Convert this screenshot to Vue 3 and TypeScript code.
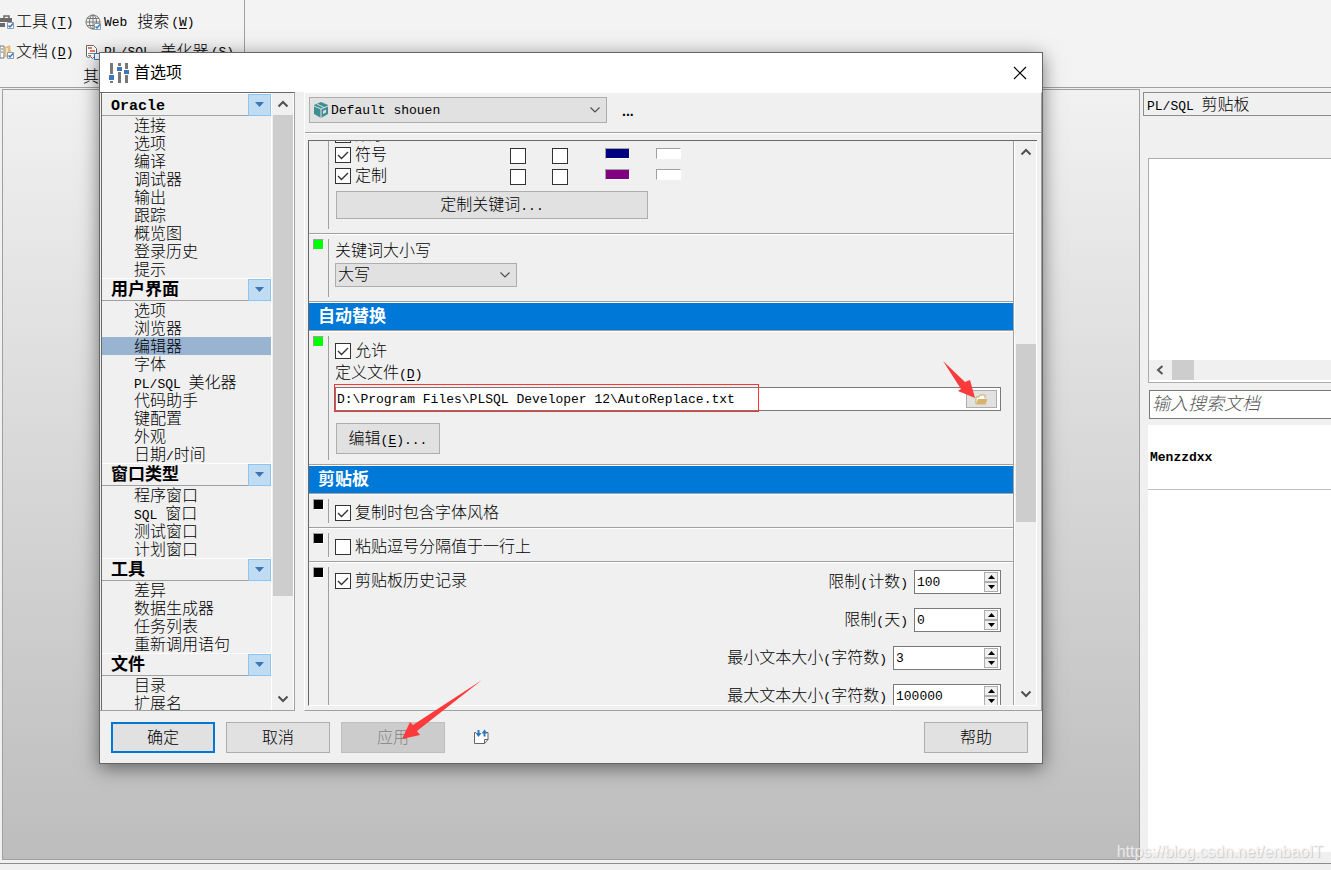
<script setup lang="ts">
import { h, ref } from 'vue'

interface TreeGroup {
  title: string
  items: string[]
}

interface LimitField {
  id: string
  label: string
  value: number
  wide: boolean
}

interface StyleRow {
  name: string
  checked: boolean
  color: string
}

// Splits a caption into CJK and Latin runs; "&X" marks the access key.
const Caption = (props: { text: string }) => {
  const runs = props.text.match(/[\x20-\x7e]+|[^\x20-\x7e]+/g) ?? []
  return runs.map((run) => {
    if (!/^[\x20-\x7e]/.test(run)) return run
    const parts = run.split(/&(.)/)
    return h('span', { class: 'mono' }, parts.map((p, i) => (i % 2 ? h('u', p) : p)))
  })
}
Caption.props = ['text']

const groups: TreeGroup[] = [
  { title: 'Oracle', items: ['连接', '选项', '编译', '调试器', '输出', '跟踪', '概览图', '登录历史', '提示'] },
  { title: '用户界面', items: ['选项', '浏览器', '编辑器', '字体', 'PL/SQL 美化器', '代码助手', '键配置', '外观', '日期/时间'] },
  { title: '窗口类型', items: ['程序窗口', 'SQL 窗口', '测试窗口', '计划窗口'] },
  { title: '工具', items: ['差异', '数据生成器', '任务列表', '重新调用语句'] },
  { title: '文件', items: ['目录', '扩展名'] },
]
const selected = ref('编辑器')

const styleRows = ref<StyleRow[]>([
  { name: '数字', checked: true, color: 'navy' },
  { name: '符号', checked: true, color: 'navy' },
  { name: '定制', checked: true, color: 'purple' },
])

const allow = ref(true)
const copyStyle = ref(true)
const pasteComma = ref(false)
const history = ref(true)
const path = ref('D:\\Program Files\\PLSQL Developer 12\\AutoReplace.txt')

const limits = ref<LimitField[]>([
  { id: 'count', label: '限制(计数)', value: 100, wide: false },
  { id: 'days', label: '限制(天)', value: 0, wide: false },
  { id: 'min', label: '最小文本大小(字符数)', value: 3, wide: true },
  { id: 'max', label: '最大文本大小(字符数)', value: 100000, wide: true },
])
</script>

<template>
  <div class="app">
    <header class="ribbon">
      <div class="group">
        <div class="tools">
          <button class="tool">
            <svg width="14" height="16" viewBox="0 0 14 16">
              <path d="M4 4V2h5v2" fill="none" stroke="#6b6b6b" stroke-width="1.5" />
              <path d="M0 4h12v4H0zM0 9h5v4H0z" fill="#6b6b6b" />
              <path d="M7.500 8.500h6v6h-6z" fill="#fff" stroke="#8a9cb0" />
              <path d="M8.500 11.500l1.500 1.500 3-3.500" fill="none" stroke="#2f78c4" stroke-width="1.500" />
            </svg>
            <Caption text="工具(&T)" />
          </button>
          <button class="tool">
            <svg width="17" height="17" viewBox="0 0 17 17">
              <g fill="none" stroke="#777">
                <circle cx="8" cy="8" r="7" />
                <ellipse cx="8" cy="8" rx="3.500" ry="7" />
                <path d="M1 8h14M2 4.500h12M2 11.500h12M8 1v14" />
              </g>
              <path d="M9.500 9.500h6v6h-6z" fill="#fff" stroke="#8a9cb0" />
              <path d="M10.500 12.500l1.500 1.500 3-3.500" fill="none" stroke="#2f78c4" stroke-width="1.500" />
            </svg>
            <Caption text="Web 搜索(&W)" />
          </button>
          <button class="tool">
            <svg width="14" height="16" viewBox="0 0 14 16">
              <path d="M0 2h4v12H0z" fill="#fff" stroke="#777" />
              <path d="M1 5h2M1 8h2" stroke="#777" />
              <path d="M5 3l5-2 1 7-2 5H5z" fill="#e6bd78" />
              <path d="M7 4v7" stroke="#fff" />
              <path d="M7.500 8.500h6v6h-6z" fill="#fff" stroke="#8a9cb0" />
              <path d="M8.500 11.500l1.500 1.500 3-3.500" fill="none" stroke="#2f78c4" stroke-width="1.500" />
            </svg>
            <Caption text="文档(&D)" />
          </button>
          <button class="tool">
            <svg width="17" height="17" viewBox="0 0 17 17">
              <path d="M1.500 1.500h7l3 3v9l-2-1-2 2-2-2-2 1-2-1z" fill="#fff" stroke="#666" />
              <path d="M3 4h4M5 7h5" stroke="#d9532c" stroke-width="1.500" />
              <path d="M3 9.500h6M3 11.500h3" stroke="#888" />
              <path d="M9.500 9.500h6v6h-6z" fill="#fff" stroke="#2f78c4" />
            </svg>
            <Caption text="PL/SQL 美化器(&S)" />
          </button>
        </div>
        <div class="group-name">其它</div>
      </div>
    </header>

    <main class="work">
      <div class="mdi"></div>
      <aside class="dock">
        <h2 class="dock-title"><Caption text="PL/SQL 剪贴板" /></h2>
        <div class="clips">
          <div class="clip-list"></div>
          <div class="hbar">
            <svg width="8" height="10" viewBox="0 0 8 10"><path d="M6.500 1L2 5l4.500 4" fill="none" stroke="#555" stroke-width="2" /></svg>
            <span class="hthumb"></span>
          </div>
        </div>
        <input class="search" type="text" placeholder="输入搜索文档" aria-label="输入搜索文档" />
        <div class="result"><p>Menzzdxx</p></div>
      </aside>
    </main>
    <footer class="status"></footer>

    <section class="dialog" role="dialog" aria-labelledby="dlg-title">
      <div class="titlebar">
        <svg width="22" height="22" viewBox="0 0 22 22">
          <path d="M3.500 1v20M11.500 1v20M18.500 1v20" stroke="#777" stroke-width="3" />
          <path d="M1 12h5v7H1zM9 4h5v6H9zM16 7h5v6h-5z" fill="#fff" />
          <path d="M1 13h5v5H1zM9 5h5v4H9zM16 8h5v4h-5z" fill="#3c78b8" />
        </svg>
        <h1 id="dlg-title">首选项</h1>
        <button class="close" aria-label="关闭">
          <svg width="14" height="14" viewBox="0 0 14 14"><path d="M1 1l12 12M13 1L1 13" stroke="#000" stroke-width="1.200" /></svg>
        </button>
      </div>

      <div class="body">
        <nav class="tree">
          <div class="tree-list">
            <template v-for="g in groups" :key="g.title">
              <div class="tree-head">
                <h3><Caption :text="g.title" /></h3>
                <button class="drop" :aria-label="g.title">
                  <svg width="10" height="6" viewBox="0 0 10 6"><path d="M0 0h9L4.500 5z" fill="#3c74b4" /></svg>
                </button>
              </div>
              <button
                v-for="i in g.items"
                :key="i"
                class="leaf"
                :class="{ on: i === selected }"
                @click="selected = i"
              ><Caption :text="i" /></button>
            </template>
          </div>
          <div class="vbar">
            <svg class="arr" width="12" height="8" viewBox="0 0 12 8"><path d="M1.500 6.500L6 2l4.500 4.500" fill="none" stroke="#505050" stroke-width="2" /></svg>
            <div class="track"><span class="thumb tree-thumb"></span></div>
            <svg class="arr" width="12" height="8" viewBox="0 0 12 8"><path d="M1.500 1.500L6 6l4.500-4.500" fill="none" stroke="#505050" stroke-width="2" /></svg>
          </div>
        </nav>

        <div class="pane">
          <div class="profile">
            <div class="combo profile-combo">
              <svg class="cube" width="16" height="16" viewBox="0 0 16 16">
                <path d="M8 0l7 3v9l-7 4-7-4V3z" fill="#3f8f92" />
                <path d="M1 4l7 3 7-3M8 7v9M4 2l7 3.500" fill="none" stroke="#e1e1e1" />
                <path d="M10 9l3-1.500v3L10 12z" fill="#e1e1e1" />
              </svg>
              <select class="mono-field" aria-label="配置">
                <option>Default shouen</option>
              </select>
              <svg class="chev" width="12" height="8" viewBox="0 0 12 8"><path d="M1.500 1.500L6 6l4.500-4.500" fill="none" stroke="#505050" stroke-width="1.200" /></svg>
            </div>
            <button class="more" aria-label="更多">...</button>
          </div>

          <div class="frame">
            <div class="options">
              <div class="opt first">
                <div class="mark"></div>
                <div class="cell">
                  <div v-for="r in styleRows" :key="r.name" class="style-row">
                    <label><input v-model="r.checked" type="checkbox" />{{ r.name }}</label>
                    <input type="checkbox" :aria-label="r.name + ' 粗体'" />
                    <input type="checkbox" :aria-label="r.name + ' 斜体'" />
                    <span class="swatch" :style="{ background: r.color }"></span>
                    <span class="swatch"></span>
                  </div>
                  <button class="btn keywords"><Caption text="定制关键词..." /></button>
                </div>
              </div>

              <div class="opt">
                <div class="mark"><i class="dot green"></i></div>
                <div class="cell case">
                  <label for="kw-case">关键词大小写</label>
                  <div class="combo case-combo">
                    <select id="kw-case"><option>大写</option></select>
                    <svg class="chev" width="12" height="8" viewBox="0 0 12 8"><path d="M1.500 1.500L6 6l4.500-4.500" fill="none" stroke="#505050" stroke-width="1.200" /></svg>
                  </div>
                </div>
              </div>

              <h3 class="band">自动替换</h3>

              <div class="opt">
                <div class="mark"><i class="dot green"></i></div>
                <div class="cell replace">
                  <label><input v-model="allow" type="checkbox" />允许</label>
                  <label for="def-file"><Caption text="定义文件(&D)" /></label>
                  <div class="file">
                    <input id="def-file" v-model="path" class="mono-field" type="text" />
                    <button class="browse" aria-label="浏览">
                      <svg width="13" height="11" viewBox="0 0 13 11">
                        <path d="M1 10V3h3l1-2h5v3" fill="#fff" stroke="#d0a860" />
                        <path d="M1 10.500L3 5h9.500l-2 5.500z" fill="#d9b36c" />
                      </svg>
                      <svg class="arrow-a" width="34" height="40" viewBox="0 0 34 40"><path d="M1 1L23 22l5-2 5 18-17-7 3-2z" fill="#fb3b3b" /></svg>
                    </button>
                    <span class="redbox"></span>
                  </div>
                  <button class="btn edit"><Caption text="编辑(&E)..." /></button>
                </div>
              </div>

              <h3 class="band">剪贴板</h3>

              <div class="opt">
                <div class="mark"><i class="dot"></i></div>
                <div class="cell line"><label><input v-model="copyStyle" type="checkbox" />复制时包含字体风格</label></div>
              </div>
              <div class="opt">
                <div class="mark"><i class="dot"></i></div>
                <div class="cell line"><label><input v-model="pasteComma" type="checkbox" />粘贴逗号分隔值于一行上</label></div>
              </div>
              <div class="opt last">
                <div class="mark"><i class="dot"></i></div>
                <div class="cell line hist">
                  <label><input v-model="history" type="checkbox" />剪贴板历史记录</label>
                  <div class="limits">
                    <div v-for="f in limits" :key="f.id" class="limit">
                      <label :for="f.id"><Caption :text="f.label" /></label>
                      <div class="spin" :class="{ wide: f.wide }">
                        <input :id="f.id" v-model="f.value" class="mono-field" type="number" />
                        <div class="steps">
                          <button aria-label="增加" @click="f.value++"><svg width="7" height="4" viewBox="0 0 7 4"><path d="M0 4h7L3.500 0z" /></svg></button>
                          <button aria-label="减少" @click="f.value--"><svg width="7" height="4" viewBox="0 0 7 4"><path d="M0 0h7L3.500 4z" /></svg></button>
                        </div>
                      </div>
                    </div>
                  </div>
                </div>
              </div>
            </div>
            <div class="vbar">
              <svg class="arr" width="12" height="8" viewBox="0 0 12 8"><path d="M1.500 6.500L6 2l4.500 4.500" fill="none" stroke="#505050" stroke-width="2" /></svg>
              <div class="track"><span class="thumb opt-thumb"></span></div>
              <svg class="arr" width="12" height="8" viewBox="0 0 12 8"><path d="M1.500 1.500L6 6l4.500-4.500" fill="none" stroke="#505050" stroke-width="2" /></svg>
            </div>
          </div>
        </div>
      </div>

      <div class="actions">
        <button class="btn ok">确定</button>
        <button class="btn">取消</button>
        <span class="apply">
          <button class="btn" disabled>应用</button>
          <svg class="arrow-b" width="82" height="62" viewBox="0 0 82 62"><path d="M81 1L12 46l-3-3L1 60l18-4-3-4z" fill="#fb3b3b" /></svg>
        </span>
        <button class="transfer" aria-label="导入导出">
          <svg width="17" height="16" viewBox="0 0 17 16">
            <path d="M3 3.500H1.500v11h10l3.500-4v-7H13" fill="#fff" stroke="#666" />
            <path d="M11.500 14.500v-4H15" fill="none" stroke="#666" />
            <path d="M5.500 1v5M11.500 7.500V3" stroke="#2f78b8" stroke-width="2" />
            <path d="M2.500 4h6l-3 4zM8.500 4.500h6l-3-4z" fill="#2f78b8" />
          </svg>
        </button>
        <button class="btn help">帮助</button>
      </div>
    </section>

    <p class="watermark">https://blog.csdn.net/enbaoIT</p>
  </div>
</template>

<style>
html,
body {
  background: #f0f0f0;
}
.mono {
  font-family: "Liberation Mono", monospace;
  font-size: 13px;
  line-height: 1;
  white-space: pre;
}
h3 .mono {
  font-size: 15px;
}
.mono u {
  text-underline-offset: 2px;
}
</style>

<style scoped>
.app {
  position: relative;
  display: flex;
  flex-direction: column;
  min-height: 100vh;
  overflow: hidden;
  background: #f0f0f0;
  color: #000;
  font: 300 16px/20px "Liberation Sans", "Noto Sans CJK SC", sans-serif;
}
* {
  box-sizing: border-box;
}
button,
input,
select {
  margin: 0;
  padding: 0;
  border: 0;
  border-radius: 0;
  background: none;
  color: inherit;
  font: inherit;
}
h1,
h2,
h3,
p {
  margin: 0;
  font-size: 16px;
  font-weight: 300;
}
svg {
  display: block;
  flex: none;
}
.mono-field {
  padding-top: 2px;
  font-family: "Liberation Mono", monospace;
  font-size: 13px;
}

/* ribbon */
.ribbon {
  display: flex;
  height: 88px;
  background: #f3f3f3;
  border-bottom: 1px solid #a0a0a0;
}
.group {
  width: 245px;
  border-right: 1px solid #a0a0a0;
}
.tools {
  display: grid;
  grid-template-columns: 85px 1fr;
  grid-auto-rows: 30px;
  padding-top: 7px;
}
.tool {
  display: flex;
  align-items: center;
  gap: 2px;
  white-space: nowrap;
}
.group-name {
  padding-left: 83px;
}

/* workspace */
.work {
  display: flex;
  flex: 1;
  gap: 3px;
  padding: 1px 0 3px 2px;
}
.mdi {
  flex: 1;
  border: 1px solid #a0a0a0;
  background: linear-gradient(#f1f1f1, #bdbdbd);
}
.dock {
  display: flex;
  flex-direction: column;
  width: 188px;
  padding: 3px 0 8px;
}
.dock-title {
  height: 24px;
  padding-left: 3px;
  border: 1px solid #8c8c8c;
  border-right: 0;
  line-height: 24px;
}
.clips {
  display: flex;
  flex-direction: column;
  height: 225px;
  margin: 42px 0 7px 5px;
  padding-bottom: 2px;
  border: 1px solid #abadb3;
  border-right: 0;
  background: #fff;
}
.clip-list {
  flex: 1;
}
.hbar {
  display: flex;
  align-items: center;
  gap: 8px;
  height: 20px;
  padding-left: 7px;
  background: #f0f0f0;
}
.hthumb {
  width: 22px;
  height: 20px;
  background: #cdcdcd;
}
.search {
  height: 29px;
  margin-left: 6px;
  padding-left: 2px;
  border: 1px solid #7a7a7a;
  border-right: 0;
  background: #fff;
  font-size: 18px;
  font-style: italic;
}
.search::placeholder {
  color: #555;
  opacity: 1;
}
.result {
  flex: 1;
  margin: 6px 0 0 5px;
  background: #fff;
}
.result p {
  height: 65px;
  padding: 23px 0 0 2px;
  border-bottom: 1px solid #c0c0c0;
  font: bold 13px/20px "Liberation Mono", monospace;
}
.status {
  height: 7px;
  border-top: 1px solid #8c8c8c;
}

/* dialog */
.dialog {
  position: absolute;
  inset: 52px 288px 106px 99px;
  display: flex;
  flex-direction: column;
  border: 1px solid #666;
  background: #f0f0f0;
  box-shadow: 0 4px 18px rgba(0, 0, 0, 0.5);
}
.titlebar {
  display: flex;
  align-items: center;
  gap: 4px;
  height: 39px;
  padding: 0 15px 0 8px;
  background: #fff;
}
.titlebar h1 {
  font-weight: 400;
}
.close {
  display: flex;
  margin-left: auto;
}
.body {
  display: flex;
  flex: 1;
  min-height: 0;
  gap: 9px;
}
.tree {
  display: flex;
  width: 195px;
  padding-left: 1px;
  border-top: 1px solid #696969;
  border-right: 1px solid #a0a0a0;
  border-bottom: 1px solid #a0a0a0;
}
.tree-list {
  width: 170px;
  overflow: hidden;
  border-left: 1px solid #696969;
}
.tree-head {
  display: flex;
  align-items: center;
  justify-content: space-between;
  height: 23px;
  padding-left: 9px;
  border-top: 1px solid #fff;
  border-bottom: 1px solid #a0a0a0;
}
.tree-head h3 {
  font-size: 17px;
  font-weight: 700;
}
.drop {
  display: grid;
  place-items: center;
  width: 23px;
  height: 22px;
  border: 1px solid #8ec5f0;
  background: #c0dcf3;
}
.leaf {
  display: block;
  width: 100%;
  height: 18px;
  padding-left: 32px;
  line-height: 20px;
  text-align: left;
  white-space: nowrap;
}
.leaf.on {
  background: #99b4d1;
}
.vbar {
  display: flex;
  flex-direction: column;
  align-items: center;
  justify-content: space-between;
  flex: none;
  width: 23px;
  padding: 7px 1px;
  border-right: 1px solid #fff;
  border-left: 1px solid #fff;
}
.track {
  flex: 1;
  width: 20px;
  margin: 7px 0;
}
.thumb {
  display: block;
  width: 20px;
  background: #cdcdcd;
}
.tree-thumb {
  height: 84%;
}
.pane {
  display: flex;
  flex: 1;
  flex-direction: column;
  min-width: 0;
  border-top: 1px solid #fff;
  border-left: 1px solid #fff;
  border-bottom: 1px solid #a0a0a0;
  border-right: 1px solid #a0a0a0;
}
.profile {
  display: flex;
  align-items: center;
  gap: 15px;
  height: 40px;
  padding: 0 4px 6px;
  border-bottom: 1px solid #a0a0a0;
  box-shadow: 0 1px #fff;
}
.combo {
  position: relative;
  display: flex;
  align-items: center;
  border: 1px solid #adadad;
  background: #e1e1e1;
}
.combo select {
  flex: 1;
  height: 100%;
  padding-left: 2px;
  appearance: none;
}
.combo .chev {
  margin-right: 5px;
  pointer-events: none;
}
.profile-combo {
  width: 298px;
  height: 26px;
}
.cube {
  margin-left: 3px;
}
.more {
  padding-top: 2px;
  font-size: 14px;
  font-weight: 700;
}
.frame {
  display: flex;
  flex: 1;
  min-height: 0;
  margin: 7px 4px 4px 3px;
  border-top: 1px solid #696969;
  border-left: 1px solid #696969;
  border-bottom: 1px solid #fff;
}
.options {
  flex: 1;
  min-width: 0;
  overflow: hidden;
  border-right: 1px solid #a0a0a0;
}
.opt-thumb {
  height: 178px;
  margin-top: 181px;
}
.opt {
  display: flex;
  padding: 5px 0 4px;
  border-bottom: 1px solid #a0a0a0;
  box-shadow: 0 1px #fff;
}
.opt.first {
  padding-top: 0;
}
.opt.last {
  border: 0;
}
.mark {
  flex: none;
  width: 20px;
  padding-left: 4px;
  border-right: 1px solid #a0a0a0;
}
.dot {
  display: block;
  width: 11px;
  height: 11px;
  border: 1px solid #a0a0a0;
  border-right-color: #fff;
  border-bottom-color: #fff;
  background: #000;
}
.dot.green {
  background: #0f0;
}
.cell {
  flex: 1;
  min-width: 0;
  padding: 0 12px 0 6px;
}
label {
  display: flex;
  align-items: center;
  gap: 4px;
  white-space: nowrap;
}
.replace label[for],
.limit label {
  display: block;
}
input[type="checkbox"] {
  flex: none;
  width: 16px;
  height: 16px;
  appearance: none;
  border: 1px solid #333;
  background: #fff;
}
input[type="checkbox"]:checked {
  background: #fff url("data:image/svg+xml,%3Csvg xmlns='http://www.w3.org/2000/svg' viewBox='0 0 14 14'%3E%3Cpath d='M2 7l3.500 3.500L12 4' fill='none' stroke='%23333' stroke-width='1.400'/%3E%3C/svg%3E");
}
.first .cell {
  margin-top: -17px;
  padding-bottom: 10px;
}
.style-row {
  display: grid;
  grid-template-columns: 175px 42px 53px 51px 24px;
  height: 21px;
  line-height: 22px;
}
.style-row:first-child {
  height: 20px;
}
.style-row > input,
.swatch {
  margin-top: 4px;
}
.style-row:first-child > input {
  margin-top: 0;
}
.swatch {
  width: 25px;
  height: 11px;
  border: 1px solid #a0a0a0;
  border-right-color: #fff;
  border-bottom-color: #fff;
  background: #fff;
}
.btn {
  width: 104px;
  height: 31px;
  border: 1px solid #adadad;
  background: #e1e1e1;
}
.btn.keywords {
  display: block;
  width: 312px;
  height: 28px;
  margin: 5px 0 0 1px;
}
.cell.case {
  padding-bottom: 10px;
}
.case label {
  height: 24px;
}
.case-combo {
  width: 182px;
  height: 24px;
}
.band {
  height: 29px;
  padding-left: 9px;
  border-top: 1px solid #fff;
  border-bottom: 1px solid #a0a0a0;
  box-shadow: 0 1px #fff;
  background: #0078d7;
  color: #fff;
  font-size: 17px;
  font-weight: 700;
  line-height: 28px;
}
.replace {
  padding-top: 4px;
  padding-bottom: 6px;
}
.replace label {
  height: 22px;
  line-height: 22px;
}
.file {
  position: relative;
  display: flex;
  align-items: center;
  height: 24px;
  margin: 3px 0 12px;
  padding: 0 3px 0 1px;
  border: 1px solid #7a7a7a;
  background: #fff;
}
.file input {
  flex: 1;
  min-width: 0;
  height: 20px;
}
.browse {
  position: relative;
  display: grid;
  place-items: center;
  width: 31px;
  height: 18px;
  border: 1px solid #adadad;
  background: #e1e1e1;
}
.arrow-a {
  position: absolute;
  right: 20px;
  bottom: 7px;
}
.redbox {
  position: absolute;
  top: -4px;
  left: -2px;
  width: 425px;
  height: 28px;
  border: 1px solid #f33;
  pointer-events: none;
}
.btn.edit {
  display: block;
  margin-left: 1px;
}
.line > label {
  height: 20px;
  margin-top: 4px;
  line-height: 22px;
}
.hist {
  display: flex;
  align-items: flex-start;
  justify-content: space-between;
}
.limits {
  display: flex;
  flex-direction: column;
  gap: 14px;
  margin-top: 3px;
}
.limit {
  display: flex;
  align-items: center;
  justify-content: flex-end;
  gap: 6px;
}
.spin {
  display: flex;
  width: 87px;
  height: 24px;
  padding: 1px 2px 1px 2px;
  border: 1px solid #7a7a7a;
  background: #fff;
}
.spin.wide {
  width: 108px;
}
.spin input {
  flex: 1;
  min-width: 0;
  appearance: textfield;
}
.spin input::-webkit-inner-spin-button {
  appearance: none;
}
.steps {
  display: grid;
  grid-template-rows: 1fr 1fr;
  width: 14px;
}
.steps button {
  display: grid;
  place-items: center;
  border: 1px solid #adadad;
  background: #f0f0f0;
}
.actions {
  display: flex;
  align-items: center;
  gap: 11px;
  height: 52px;
  padding: 0 14px 0 11px;
}
.actions .btn {
  padding-top: 1px;
}
.btn.ok {
  border: 2px solid #0078d7;
}
.apply {
  position: relative;
}
.btn:disabled {
  border-color: #bfbfbf;
  background: #ccc;
  color: #838383;
}
.arrow-b {
  position: absolute;
  bottom: 12px;
  left: 60px;
}
.transfer {
  margin-left: 17px;
}
.help {
  margin-left: auto;
}
.watermark {
  position: absolute;
  right: 8px;
  bottom: 8px;
  color: #f4f4f4;
  font: 16px/20px "Liberation Sans", sans-serif;
  text-shadow: 1px 1px 1px #bbb;
  opacity: 0.8;
}
</style>
